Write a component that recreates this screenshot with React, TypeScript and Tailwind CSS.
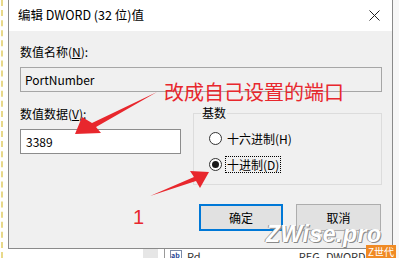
import React from "react";

const font = { fontFamily: '"Noto Sans CJK SC", "Noto Sans", sans-serif' };

function Radio({ checked, label, focus }: { checked?: boolean; label: string; focus?: boolean }) {
    return (
        <div className="flex items-center gap-[3px] h-[17px]">
            <span className="w-[13px] h-[13px] rounded-full border border-[#333] bg-white flex items-center justify-center">
                {checked && <span className="w-[7px] h-[7px] rounded-full bg-[#1a1a1a]" />}
            </span>
            <span className={"px-[1px] leading-[15px] " + (focus ? "border border-dotted border-black" : "border border-transparent")}>
                {label}
            </span>
        </div>
    );
}

export default function App() {
    return (
        <div className="relative w-[399px] h-[258px] bg-white overflow-hidden text-[12px] text-black" style={font}>
            <div className="flex h-full">
                <div className="w-[7px] h-full border-l-2 border-dashed border-[#e8d98a] ml-[1px]" />
                <div className="flex flex-col">
                    <div className="w-[385px] h-[249px] flex flex-col border-x border-b border-[#8a8a8a] bg-[#f0f0f0]">
                        {/* title bar */}
                        <div className="h-[31px] bg-white flex items-center justify-between pl-[9px] pr-[10px]">
                            <span className="text-[12.5px]">编辑 DWORD (32 位)值</span>
                            <svg width="11" height="11" viewBox="0 0 11 11" className="mr-[2px]">
                                <path d="M0.5 0.5L10.5 10.5M10.5 0.5L0.5 10.5" stroke="#222" strokeWidth="1" />
                            </svg>
                        </div>
                        {/* body */}
                        <div className="flex flex-col pl-[11px] pr-[10px] pt-[13px]">
                            <div className="leading-[16px]">
                                数值名称(<span className="underline">N</span>):
                            </div>
                            <div className="mt-[7px] h-[25px] border border-[#a6a6a6] bg-[#f0f0f0] flex items-center pl-[4px]">
                                PortNumber
                            </div>
                            <div className="flex mt-[14px] gap-[12px]">
                                <div className="w-[161px] flex flex-col">
                                    <div className="leading-[16px]">
                                        数值数据(<span className="underline">V</span>):
                                    </div>
                                    <div className="mt-[7px] h-[25px] border border-[#8c8c8c] bg-white flex items-center pl-[5px]">
                                        3389
                                    </div>
                                </div>
                                <fieldset className="w-[189px] h-[79px] border border-[#dcdcdc] pl-[15px] pt-[10px] flex flex-col gap-[9px]">
                                    <legend className="px-[1px] -ml-[8px] leading-[14px]">基数</legend>
                                    <Radio label="十六进制(H)" />
                                    <Radio label="十进制(D)" checked focus />
                                </fieldset>
                            </div>
                            <div className="flex justify-end gap-[13px] mt-[19px] pr-[1px]">
                                <div className="w-[84px] h-[27px] border-2 border-[#0078d7] bg-[#e1e1e1] flex items-center justify-center">
                                    确定
                                </div>
                                <div className="w-[85px] h-[27px] border border-[#adadad] bg-[#e1e1e1] flex items-center justify-center">
                                    取消
                                </div>
                            </div>
                        </div>
                    </div>
                    {/* regedit list behind */}
                    <div className="flex items-center h-[9px] overflow-hidden text-[11px] text-[#333]">
                        <div className="w-[15px] h-[9px] bg-[#e6e6e6] ml-[135px]" />
                        <div className="w-px h-[9px] bg-[#999] ml-[6px]" />
                        <div className="w-[12px] h-[9px] border border-[#7a8aa8] ml-[5px] mt-[2px] text-[7px] leading-[8px] text-[#1c3f94] font-bold">ab</div>
                        <span className="ml-[5px] mt-[6px]">Rd</span>
                        <span className="ml-[98px] mt-[6px]">REG_DWORD</span>
                    </div>
                </div>
                <div className="flex-1 bg-[#f7f7f7]" />
            </div>

            {/* annotations */}
            <svg className="absolute inset-0 pointer-events-none" width="399" height="258" viewBox="0 0 399 258">
                <polygon points="157,92 96,127 101,133 75,134 82,117 92,123" fill="#e8272d" />
                <polygon points="150,196 196,181 200,188 209,172 190,171 194,177" fill="#e8272d" />
            </svg>
            <div className="absolute left-[164px] top-[80px] text-[20px] leading-[24px] text-[#e8272d] pointer-events-none">
                改成自己设置的端口
            </div>
            <div className="absolute left-[133px] top-[205px] text-[20px] leading-[24px] text-[#e8272d]" style={{ fontFamily: '"Liberation Sans", sans-serif' }}>
                1
            </div>

            {/* watermark */}
            <div
                className="absolute left-[266px] top-[221px] text-[23px] leading-[26px] italic font-black text-white tracking-[0.5px]"
                style={{ fontFamily: '"Liberation Sans", sans-serif', textShadow: "1px 1px 0 #8a8a8a, -1px 0 0 #9a9a9a" }}
            >
                ZWise.pro
            </div>
            <div className="absolute left-[366px] top-[245px] w-[30px] h-[14px] bg-[#f08a24] text-white text-[10px] leading-[14px] text-center">
                Z世代
            </div>
        </div>
    );
}
